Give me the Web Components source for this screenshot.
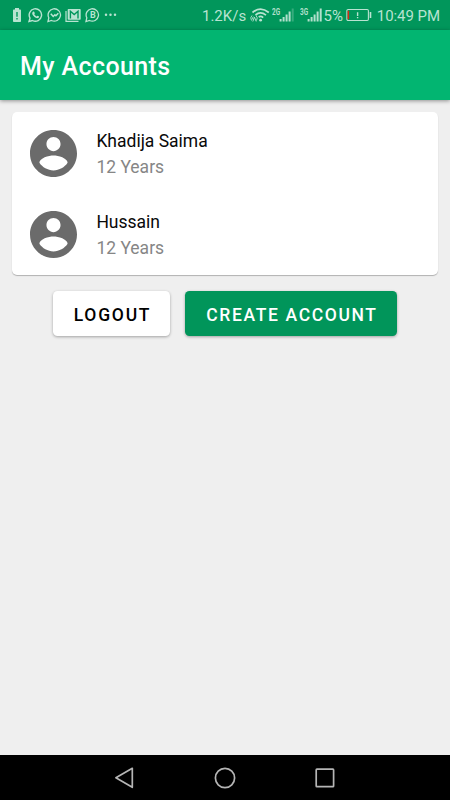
<!DOCTYPE html>
<html lang="en">
<head>
<meta charset="utf-8">
<title>My Accounts</title>
<style>
html,body{margin:0;height:100%;background:#efefef;font-family:Roboto,"Noto Sans",sans-serif}
</style>
</head>
<body>
<accounts-screen></accounts-screen>
<script>
function define(name, html) {
  const t = document.createElement('template');
  t.innerHTML = html;
  customElements.define(name, class extends HTMLElement {
    constructor() {
      super();
      this.attachShadow({ mode: 'open' }).append(t.content.cloneNode(true));
    }
  });
}

define('signal-meter', `
<style>
:host{display:grid;grid-template-columns:7px 15px;height:14px;color:#b3e0cd}
b{font:700 8.500px/8px Roboto,sans-serif;width:11px;white-space:nowrap;transform:scaleX(.76);transform-origin:0 0}
svg{display:block}
</style>
<b><slot></slot></b>
<svg width="15" height="14" viewBox="0 0 15 14" fill="currentColor"><path d="M.6 11h2v2.500h-2zM3.600 9h2v4.500h-2zM6.600 6.500h2v7h-2zM9.600 3.500h2v10h-2z"/><path d="M12.700.5h2v13h-2z" style="opacity:var(--last,1)"/></svg>`);

define('status-bar', `
<style>
:host{display:flex;align-items:center;justify-content:space-between;height:30px;box-sizing:border-box;padding:0 10px 0 12px;background:#01965b;color:#b9e3d1}
div{display:flex;align-items:center}
svg{display:block;flex:none}
.left{gap:3.5px}
.t{font-size:15px;line-height:18px;white-space:nowrap;padding-top:2px}
</style>
<div class="left">
<svg width="10" height="16" viewBox="0 0 10 16"><path fill="currentColor" fill-rule="evenodd" d="M3 1h4v1.600h1.200q.8 0 .8.8v10.800q0 .8-.8.8H1.800q-.8 0-.8-.8V3.400q0-.8.8-.8H3zM4.300 5v4.700h1.400V5zM4.300 11v1.600h1.400V11z"/></svg>
<svg width="15" height="16" viewBox="0 0 15 16" style="margin-left:2.500px"><path d="M1 14.500l1-3.400A6.200 6.200 0 1 1 4.500 13.500z" fill="none" stroke="currentColor" stroke-width="1.400"/><path fill="currentColor" d="M5.300 4.500q.6-.2.9.3l.6 1.400q0 .5-.6 1 .9 1.600 2.400 2.300.7-.9 1-.8l1.500.8q.1 1.700-1.900 1.800-3-.4-4.900-4-.7-1.900 1-2.800z"/></svg>
<svg width="15" height="16" viewBox="0 0 15 16"><path d="M1 14.500l.8-3.700A6.200 6.200 0 1 1 4.500 13.500z" fill="none" stroke="currentColor" stroke-width="1.300"/><path d="M3.800 6.800l2.400 2.700 1.700-1.700 1 .9 2.400-2.500" fill="none" stroke="currentColor" stroke-width="1.500"/></svg>
<svg width="16" height="16" viewBox="0 0 16 16"><path d="M1 4v10.300h12.500" fill="none" stroke="currentColor" stroke-width="1.200"/><rect x="2.700" y="2" width="13" height="10.700" rx=".8" fill="currentColor"/><path d="M5.400 11.500V4.200l3.800 3.400L13 4.200v7.300" fill="none" stroke="#01965b" stroke-width="1.400"/></svg>
<svg width="15" height="16" viewBox="0 0 15 16"><path d="M1 14.500l.8-3.700A6.200 6.200 0 1 1 4.500 13.500z" fill="none" stroke="currentColor" stroke-width="1.300"/><text x="4.900" y="10.900" font-family="Roboto" font-weight="700" font-size="9" fill="currentColor">B</text></svg>
<svg width="13" height="16" viewBox="0 0 13 16" style="margin-left:1px" fill="currentColor"><circle cx="2" cy="7.700" r="1.250"/><circle cx="6.500" cy="7.700" r="1.250"/><circle cx="11" cy="7.700" r="1.250"/></svg>
</div>
<div>
<span class="t">1.2K/s</span>
<svg width="20" height="16" viewBox="0 0 20 16" style="margin-left:3.500px" fill="none" stroke="currentColor"><path stroke-width="1.700" d="M2.500 5.500Q10.500-1.200 18.800 5.500M5.500 8Q10.500 3.900 16 8.200M8.700 10Q10.800 8.700 13.200 10.600"/><circle cx="10.600" cy="13.200" r="1.400" fill="currentColor" stroke="none"/><path stroke-width=".9" d="M1.500 13.500Q-.2 10.500 2 8.500M2.900 12.500Q2 10.700 3.400 9.700M6.500 13.500Q8.200 10.500 6 8.500M2.800 14.500L4.500 10.200 6.200 14.500"/></svg>
<signal-meter style="margin-left:2.500px;--last:.3">2G</signal-meter>
<signal-meter style="margin-left:5.500px">3G</signal-meter>
<span class="t" style="margin-left:1.800px">5%</span>
<svg width="26" height="14" viewBox="0 0 26 14" style="margin-left:3px"><rect x=".9" y="1.500" width="21.500" height="11" rx="1.200" fill="none" stroke="currentColor" stroke-width="1.100"/><path d="M23.700 4h1.600v6h-1.600zM10.900 4.300h1.400v3.600h-1.400zM10.900 9h1.400v1.300h-1.400z" fill="currentColor"/><path d="M1.600 2.700h1.500v8.600H1.600z" fill="#d62a16"/></svg>
<span class="t" style="margin-left:4.900px;letter-spacing:-.05px">10:49 PM</span>
</div>`);

define('app-bar', `
<style>
:host{display:flex;align-items:center;height:70px;box-sizing:border-box;padding:3px 20px 0;background:#02b571;color:#fff;font-size:25px;font-weight:500;box-shadow:0 1px 4px rgba(0,0,0,.4);letter-spacing:.4px}
</style><slot></slot>`);

define('account-row', `
<style>
:host{display:flex;align-items:center;height:81.300px;padding:0 17.200px;gap:19.800px;font-size:17.500px;line-height:26px}
svg{display:block;flex:none}
.text{padding-top:2px}
.sub{color:#868686}.name{color:#090909}
</style>
<svg width="47" height="47" viewBox="2 2 20 20"><path fill="#6b6b6b" d="M12 2C6.480 2 2 6.480 2 12s4.480 10 10 10 10-4.480 10-10S17.520 2 12 2zm0 3c1.660 0 3 1.340 3 3s-1.340 3-3 3-3-1.340-3-3 1.340-3 3-3zm0 14.200c-2.500 0-4.710-1.280-6-3.220.03-1.990 4-3.080 6-3.080 1.990 0 5.970 1.090 6 3.080-1.290 1.940-3.500 3.220-6 3.220z"/></svg>
<div class="text"><div class="name"><slot name="name"></slot></div><div class="sub"><slot></slot></div></div>`);

define('account-card', `
<style>:host{display:block;margin:12.400px 12.500px 0 12.400px;height:162.600px;background:#fff;border-radius:5px;box-shadow:0 1px 1px rgba(0,0,0,.26)}</style><slot></slot>`);

define('action-button', `
<style>
:host{display:block}
button{display:block;height:45px;border:0;border-radius:4.500px;padding:2px 0 0 21px;margin:0;width:100%;text-align:left;background:#fff;color:#000;font:500 17.500px Roboto,sans-serif;letter-spacing:1.750px;white-space:nowrap;box-shadow:0 1px 3px rgba(0,0,0,.32)}
:host([primary]) button{background:#01955a;color:#fff;letter-spacing:1.640px}
</style><button><slot></slot></button>`);

define('nav-bar', `
<style>
:host{display:flex;justify-content:center;align-items:center;gap:78px;height:45px;background:#000;color:#b5b5b5}
svg{display:block}
</style>
<svg width="22" height="24" viewBox="0 0 22 24"><path d="M1.900 11.800L18.300 2.300v19z" fill="none" stroke="currentColor" stroke-width="1.700" stroke-linejoin="round"/></svg>
<svg width="22" height="24" viewBox="0 0 22 24"><circle cx="11" cy="12" r="9.600" fill="none" stroke="currentColor" stroke-width="1.700"/></svg>
<svg width="22" height="24" viewBox="0 0 22 24"><rect x="2.200" y="3.200" width="17.400" height="17.400" rx=".7" fill="none" stroke="currentColor" stroke-width="1.700"/></svg>`);

define('accounts-screen', `
<style>
:host{display:flex;flex-direction:column;width:450px;height:800px;overflow:hidden;background:#efefef}
.actions{display:flex;justify-content:center;gap:15px;margin-top:16.400px;padding-right:.2px}
nav-bar{margin-top:auto}
</style>
<status-bar></status-bar>
<app-bar>My Accounts</app-bar>
<account-card>
<account-row><span slot="name">Khadija Saima</span>12 Years</account-row>
<account-row><span slot="name">Hussain</span>12 Years</account-row>
</account-card>
<div class="actions"><action-button style="width:117.600px">LOGOUT</action-button><action-button primary style="width:211.800px">CREATE ACCOUNT</action-button></div>
<nav-bar></nav-bar>`);
</script>
</body>
</html>
